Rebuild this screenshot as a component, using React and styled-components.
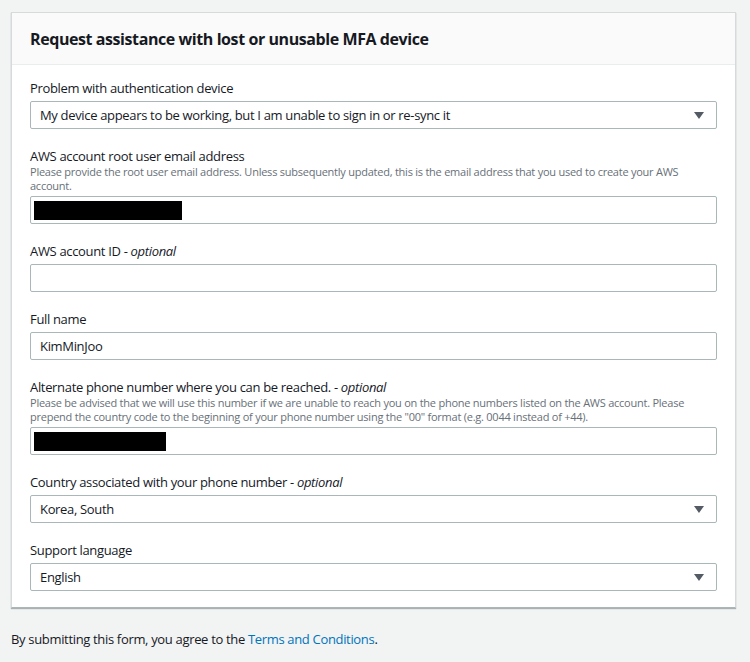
import React from 'react';
import styled, { createGlobalStyle } from 'styled-components';

const GlobalStyle = createGlobalStyle`
  body {
    margin: 0;
    background: #f2f3f3;
    font-family: "Open Sans", "Noto Sans", sans-serif;
    color: #16191f;
  }
`;

const Page = styled.div`
  padding: 12px 14px 0 11px;
`;

const Card = styled.div`
  background: #fff;
  border: 1px solid #d5dbdb;
  border-bottom-color: #aab7b8;
  box-shadow: 0 1px 1px rgba(0, 28, 36, 0.3);
`;

const CardHeader = styled.div`
  background: #fafafa;
  border-bottom: 1px solid #eaeded;
  height: 51px;
  display: flex;
  align-items: center;
  padding: 0 18px;
`;

const Title = styled.h2`
  margin: 0;
  font-size: 16px;
  font-weight: 700;
  letter-spacing: -0.42px;
`;

const Body = styled.div`
  padding: 14px 18px 16px;
  display: flex;
  flex-direction: column;
  gap: 18px;
`;

const Field = styled.div`
  display: flex;
  flex-direction: column;
`;

const Label = styled.label`
  font-size: 13px;
  line-height: 18px;
  letter-spacing: -0.33px;
  margin-bottom: 4px;
  em {
    font-style: italic;
  }
`;

const Hint = styled.div`
  font-size: 11px;
  line-height: 14px;
  letter-spacing: -0.24px;
  color: #687078;
  margin-top: -4px;
  margin-bottom: 3px;
`;

const Box = styled.div`
  height: 28px;
  box-sizing: border-box;
  border: 1px solid #aab7b8;
  border-radius: 2px;
  background: #fff;
  display: flex;
  align-items: center;
  padding: 0 12px 0 3px;
  font-size: 13px;
  letter-spacing: -0.33px;
`;

const Value = styled.span`
  padding-left: 6px;
  flex: 1;
`;

const Redacted = styled.span`
  display: block;
  width: ${p => p.$w}px;
  height: 19px;
  background: #000;
`;

const Arrow = styled.span`
  width: 0;
  height: 0;
  border-left: 5px solid transparent;
  border-right: 5px solid transparent;
  border-top: 7px solid #545b64;
`;

const Footer = styled.p`
  margin: 22px 0 0;
  font-size: 13px;
  line-height: 18px;
  letter-spacing: -0.33px;
  a {
    color: #0073bb;
    text-decoration: none;
  }
`;

const Select = ({ value }) => (
  <Box>
    <Value>{value}</Value>
    <Arrow />
  </Box>
);

export default function App() {
  return (
    <Page>
      <GlobalStyle />
      <Card>
        <CardHeader>
          <Title>Request assistance with lost or unusable MFA device</Title>
        </CardHeader>
        <Body>
          <Field>
            <Label>Problem with authentication device</Label>
            <Select value="My device appears to be working, but I am unable to sign in or re-sync it" />
          </Field>
          <Field>
            <Label>AWS account root user email address</Label>
            <Hint>
              Please provide the root user email address. Unless subsequently updated, this is the email address that you used to create your AWS account.
            </Hint>
            <Box><Redacted $w={148} /></Box>
          </Field>
          <Field>
            <Label>AWS account ID - <em>optional</em></Label>
            <Box />
          </Field>
          <Field>
            <Label>Full name</Label>
            <Box><Value>KimMinJoo</Value></Box>
          </Field>
          <Field>
            <Label>Alternate phone number where you can be reached. - <em>optional</em></Label>
            <Hint>
              Please be advised that we will use this number if we are unable to reach you on the phone numbers listed on the AWS account. Please prepend the country code to the beginning of your phone number using the "00" format (e.g. 0044 instead of +44).
            </Hint>
            <Box><Redacted $w={132} /></Box>
          </Field>
          <Field>
            <Label>Country associated with your phone number - <em>optional</em></Label>
            <Select value="Korea, South" />
          </Field>
          <Field>
            <Label>Support language</Label>
            <Select value="English" />
          </Field>
        </Body>
      </Card>
      <Footer>
        By submitting this form, you agree to the <a href="#">Terms and Conditions</a>.
      </Footer>
    </Page>
  );
}
